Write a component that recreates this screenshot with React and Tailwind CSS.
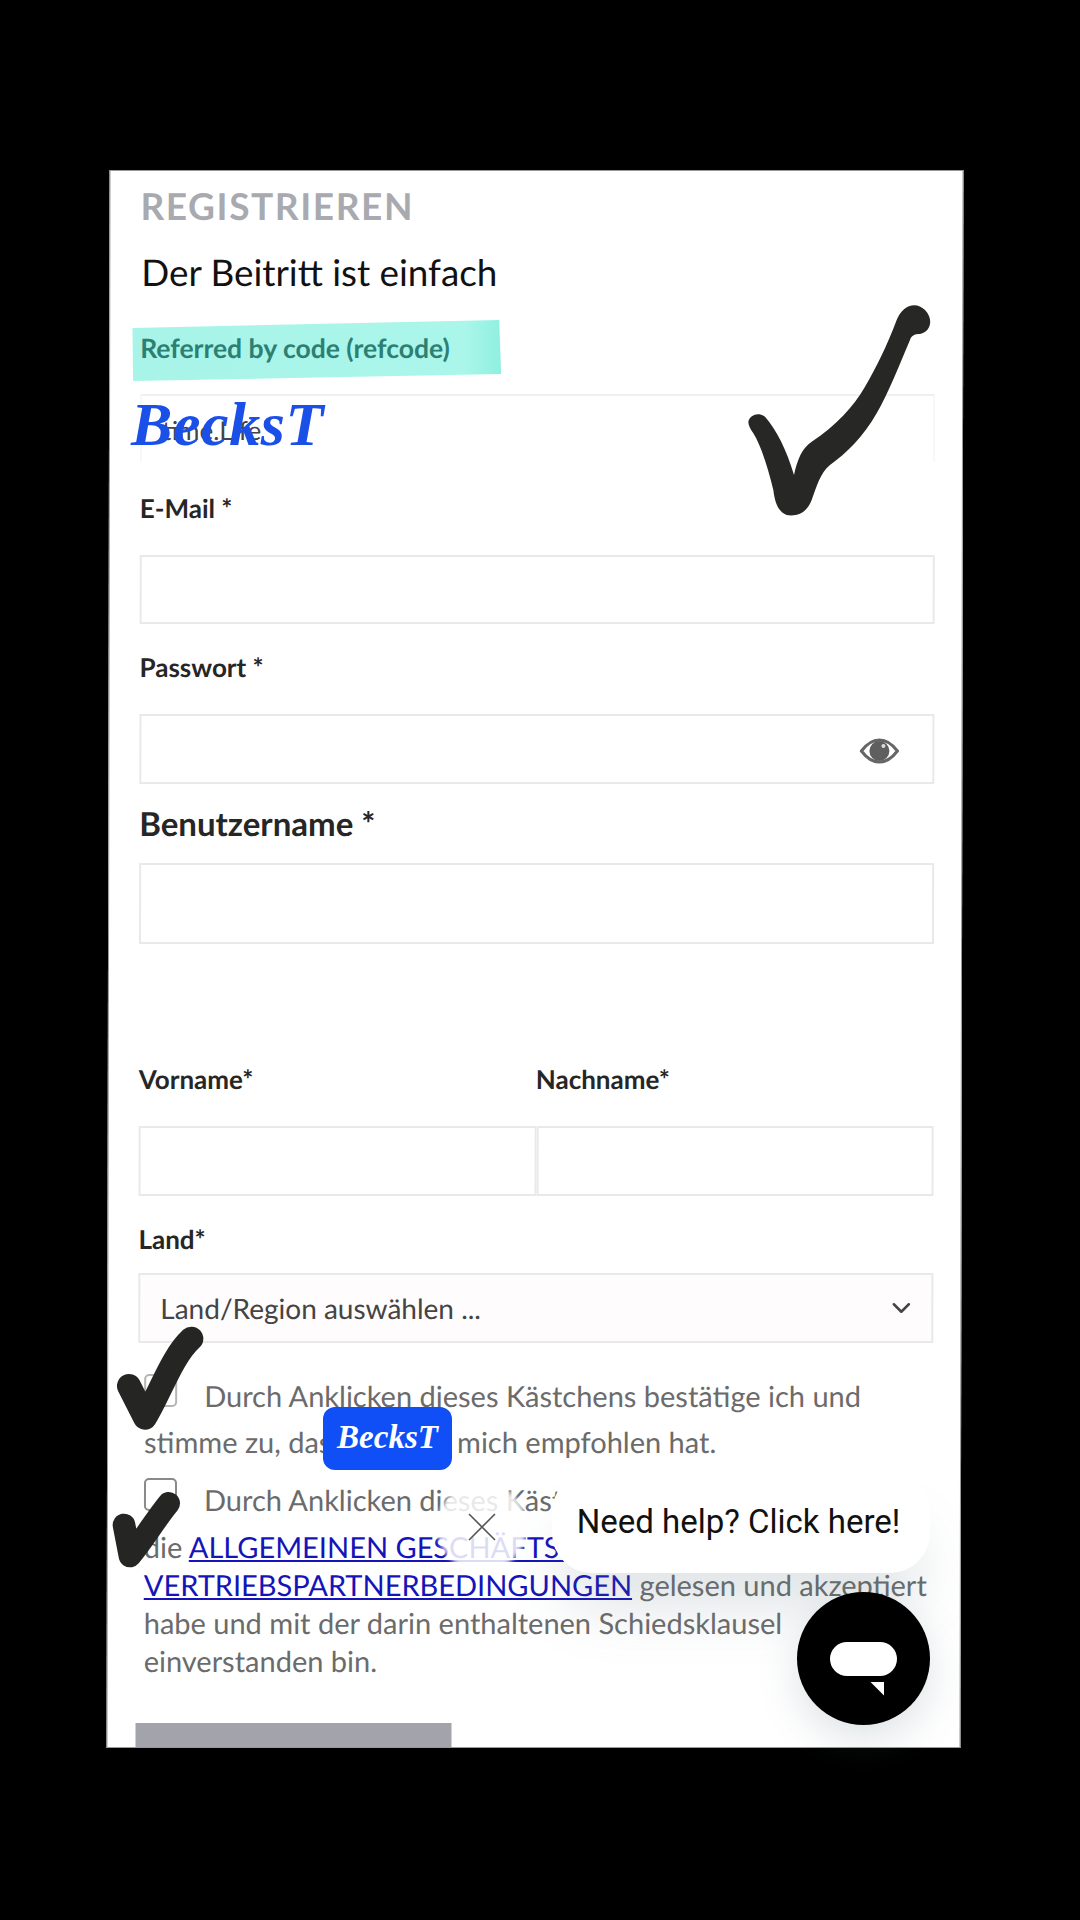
import { ChevronDown } from 'lucide-react';

const lato = "[font-family:Lato,'Noto_Sans',sans-serif]";

function Field({ className = '', placeholder, children }) {
  return (
    <div className={`relative border-2 border-[#e9e9e9] bg-white ${className}`}>
      {placeholder && <span className="absolute left-[20px] top-[19px] text-[26px] leading-[30px] text-[#444]">{placeholder}</span>}
      {children}
    </div>
  );
}

function Label({ className = '', children }) {
  return <div className={`h-[32px] text-[26px] leading-[32px] font-bold text-[#262626] ${className}`}>{children}</div>;
}

function Checkbox({ className = '' }) {
  return <span className={`mt-[1px] block h-[33px] w-[33px] shrink-0 rounded-[5px] border-2 bg-white ${className}`} />;
}

function BigCheck() {
  return (
    <svg className="absolute left-[590px] top-[150px]" width="400" height="480" viewBox="0 0 1200 1440">
      <path
        fill="#272725"
        d="M475 815C480 795 505 785 525 800C560 840 590 900 612 975C622 930 635 895 665 875C740 825 790 770 825 710C860 650 890 590 920 510C935 470 975 450 1005 480C1030 505 1025 545 990 552C975 552 965 555 960 570C930 640 895 730 860 790C820 860 770 910 720 945C690 970 680 1010 665 1050C650 1090 620 1100 590 1095C565 1085 555 1060 550 1020C535 960 515 890 490 850C480 835 475 825 475 815Z"
      />
    </svg>
  );
}

function SmallChecks() {
  return (
    <svg className="absolute left-[100px] top-[1300px]" width="500" height="280" viewBox="0 0 1500 840" fill="none" stroke="#252523" strokeLinecap="round" strokeLinejoin="round">
      <path strokeWidth="72" d="M87 258L135 353C180 280 215 170 274 116" />
      <path strokeWidth="68" d="M72 675L90 768C130 720 165 660 206 610" />
    </svg>
  );
}

function EyeIcon() {
  return (
    <svg className="absolute right-[33px] top-[22px]" width="40" height="26" viewBox="0 0 40 26">
      <path fill="none" stroke="#666" strokeWidth="3" d="M2 13C8 5 14 2 20 2C26 2 32 5 38 13C32 21 26 24 20 24C14 24 8 21 2 13Z" />
      <circle cx="20" cy="13" r="10" fill="#5f5f5f" />
      <circle cx="24" cy="8" r="2" fill="#ddd" />
    </svg>
  );
}

function ChatWidget() {
  return (
    <>
      <div className="absolute left-[437px] top-[1482px] h-[90px] w-[90px] rounded-full bg-white/85 blur-[2px]" />
      <svg className="absolute left-[468px] top-[1513px]" width="28" height="28" viewBox="0 0 28 28" stroke="#555" strokeWidth="1.6">
        <path d="M1 1L27 27M27 1L1 27" />
      </svg>
      <div className="absolute left-[552px] top-[1472px] flex h-[101px] w-[378px] items-center justify-center rounded-[40px] bg-white pb-[2px] pr-[5px] text-[33px] text-[#111] shadow-[0_45px_60px_-12px_rgba(90,115,125,0.2)] [font-family:Roboto,sans-serif]">
        Need help? Click here!
      </div>
      <div className="absolute left-[797px] top-[1592px] flex h-[133px] w-[133px] items-center justify-center rounded-full bg-black shadow-[0_14px_40px_rgba(90,115,125,0.2)]">
        <div className="relative h-[34px] w-[67px] rounded-full bg-white">
          <div className="absolute left-[40px] top-[40px] h-[14px] w-[14px] bg-white [clip-path:polygon(0_0,100%_0,100%_100%)]" />
        </div>
      </div>
    </>
  );
}

export default function App() {
  return (
    <div className={`relative h-[1920px] w-[1080px] overflow-hidden bg-black pt-[170px] ${lato}`}>
      <div className="ml-[108px] h-[1578px] w-[854px] skew-x-[-0.11deg] overflow-hidden border border-[#999] bg-white px-[30px] pt-[13px]">
        <h1 className="h-[44px] text-[37px] leading-[44px] font-bold tracking-[1.6px] text-[#a8aab0]">REGISTRIEREN</h1>
        <p className="ml-[1px] mt-[22px] h-[44px] text-[36.8px] leading-[44px] text-[#111]">Der Beitritt ist einfach</p>

        <div className="relative mt-[36px] h-[36px] text-[26.5px] leading-[36px] font-bold text-[#2b8073]">
          <span className="absolute left-[-8px] top-[-10px] h-[61px] w-[369px] bg-gradient-to-r from-[#a8f4e8] via-[#aaf6ea] via-90% to-[#8ff0df] [clip-path:polygon(0_8px,367px_0,369px_54px,1px_61px)]" />
          <span className="relative">Referred by code (refcode)</span>
        </div>

        <Field className="mt-[28px] h-[69px] w-[795px] border-x-[#f8f8f8] border-b-transparent border-t-[#f0f0f0]" placeholder="time.Life" />

        <Label className="mt-[29px]">E-Mail *</Label>
        <Field className="mt-[31px] h-[69px] w-[795px]" />

        <Label className="mt-[27px]">Passwort *</Label>
        <Field className="mt-[31px] h-[70px] w-[795px]">
          <EyeIcon />
        </Field>

        <div className="mt-[19px] h-[40px] text-[33px] leading-[40px] font-bold text-[#262626]">Benutzername *</div>
        <Field className="mt-[20px] h-[81px] w-[795px]" />

        <div className="mt-[119px] flex w-[795px]">
          <Label className="w-[397px]">Vorname*</Label>
          <Label>Nachname*</Label>
        </div>
        <div className="mt-[31px] flex w-[795px]">
          <Field className="h-[70px] w-[398px]" />
          <Field className="h-[70px] w-[397px]" />
        </div>

        <Label className="mt-[27px]">Land*</Label>
        <div className="mt-[18px] flex h-[70px] w-[795px] items-center justify-between border-2 border-[#e9e9e9] bg-[#fffcfe] pl-[20px] pr-[15px] text-[28px] text-[#444]">
          <span>Land/Region auswählen ...</span>
          <ChevronDown size={30} color="#444" strokeWidth={2} />
        </div>

        <div className="ml-[6px] mt-[30px] w-[800px] text-[29px] text-[#6b6b6b]">
          <div className="flex h-[46px] items-start leading-[46px]">
            <Checkbox className="border-[#b5b5b5]" />
            <span className="ml-[27px]">Durch Anklicken dieses Kästchens bestätige ich und</span>
          </div>
          <div className="flex h-[46px] leading-[46px]">
            <span className="w-[313px]">stimme zu, dass</span>
            <span>mich empfohlen hat.</span>
          </div>

          <div className="mt-[12px] flex h-[51px] items-start leading-[46px]">
            <Checkbox className="border-[#8a8a8a]" />
            <span className="ml-[27px] whitespace-nowrap">Durch Anklicken dieses Kästchens bestätige ich, dass ich</span>
          </div>
          <div className="leading-[38px]">
            <div>die <a className="text-[#1414b8] underline">ALLGEMEINEN GESCHÄFTS-</a></div>
            <div className="whitespace-nowrap"><a className="text-[#1414b8] underline">VERTRIEBSPARTNERBEDINGUNGEN</a> gelesen und akzeptiert</div>
            <div>habe und mit der darin enthaltenen Schiedsklausel</div>
            <div>einverstanden bin.</div>
          </div>
        </div>

        <div className="ml-[-2px] mt-[43px] h-[60px] w-[316px] bg-[#a3a3ab]" />
      </div>

      <div className="absolute left-[323px] top-[1407px] flex h-[63px] w-[129px] items-center justify-center rounded-[12px] bg-[#0f4ff5] pb-[2px] text-[33px] font-bold italic text-white [font-family:'Liberation_Serif',serif]">
        BecksT
      </div>
      <div className="absolute left-[131px] top-[389px] text-[62px] leading-[70px] font-bold italic tracking-[0.6px] text-[#1a4fe8] [font-family:'Liberation_Serif',serif]">
        BecksT
      </div>

      <ChatWidget />
      <BigCheck />
      <SmallChecks />
    </div>
  );
}
